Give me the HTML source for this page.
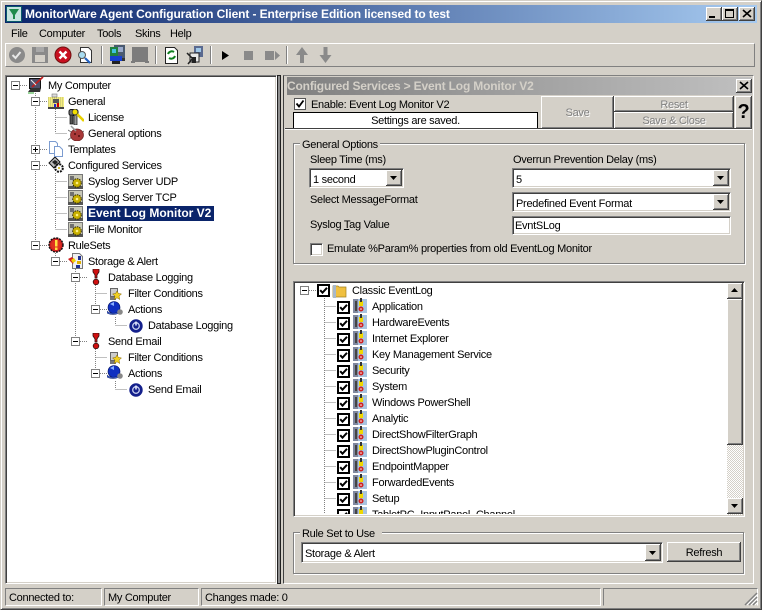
<!DOCTYPE html>
<html><head><meta charset="utf-8"><title>MonitorWare Agent Configuration Client</title>
<style>
html,body{margin:0;padding:0;background:#fff}
body{width:763px;height:611px;overflow:hidden;position:relative;font:11px "Liberation Sans",sans-serif;letter-spacing:-.28px;color:#000}
div,span.t{position:absolute;box-sizing:border-box}
.t{white-space:nowrap;line-height:16px;height:16px;margin-top:1px}
.b{margin-top:0;font-weight:bold;font-size:12px}
.sunk{background:#fff;border:1px solid;border-color:#808080 #fff #fff #808080;box-shadow:inset 1px 1px #404040,inset -1px -1px #d4d0c8}
.btn{background:#d4d0c8;box-shadow:inset -1px -1px #404040,inset 1px 1px #fff,inset -2px -2px #808080}
.grp{border:1px solid #808080;box-shadow:1px 1px #fff,inset 1px 1px #fff}
.lg{background:#d4d0c8;padding:0 2px}
.dis{color:#808080;text-shadow:1px 1px #fff;text-align:center}
svg{position:absolute;overflow:visible}
</style></head><body>
<div style="left:0;top:0;width:762px;height:610px;background:#d4d0c8;border:1px solid;border-color:#d4d0c8 #404040 #404040 #d4d0c8;box-shadow:inset 1px 1px #fff,inset -1px -1px #808080"></div>
<div style="left:5px;top:5px;width:752px;height:18px;background:linear-gradient(90deg,#0a246a,#a6caf0)"></div>
<svg style="left:6px;top:6px" width="16" height="16"><rect x=".5" y=".5" width="15" height="15" fill="#c8e4e0" stroke="#0a5a6a"/><path d="M3 3h10L9 9v4H7V9z" fill="#1f8a4c"/></svg>
<span class="t b" style="left:25px;top:6px;color:#fff;letter-spacing:-.11px">MonitorWare Agent Configuration Client - Enterprise Edition licensed to test</span>
<div class="btn" style="left:706px;top:7px;width:16px;height:14px"></div><div style="left:709px;top:16px;width:6px;height:2px;background:#000"></div>
<div class="btn" style="left:722px;top:7px;width:16px;height:14px"></div><div style="left:725px;top:9px;width:9px;height:9px;border:1px solid #000;border-top-width:2px"></div>
<div class="btn" style="left:739px;top:7px;width:16px;height:14px"></div>
<svg style="left:739px;top:7px" width="16" height="14"><path d="M4 3l8 7M12 3l-8 7" stroke="#000" stroke-width="1.6"/></svg>
<span class="t" style="left:11px;top:25px">File</span><span class="t" style="left:39px;top:25px">Computer</span><span class="t" style="left:97px;top:25px">Tools</span><span class="t" style="left:135px;top:25px">Skins</span><span class="t" style="left:170px;top:25px">Help</span>
<div style="left:5px;top:43px;width:750px;height:24px;border-top:1px solid #fff;border-bottom:1px solid #808080;border-left:1px solid #fff;border-right:1px solid #808080"></div>
<svg style="left:0;top:0" width="763" height="611">
<defs>
<symbol id="comp" viewBox="0 0 16 16" overflow="visible"><rect x="1.500" y="1.500" width="11" height="10" fill="#50506a" stroke="#111"/><path d="M0 15l3-4h10l-1 4z" fill="#333"/><path d="M4 10L15 0" stroke="#c02020" stroke-width="1.800"/><path d="M3 3l5 5" stroke="#eee"/><path d="M0 16h6" stroke="#3a3"/></symbol>
<symbol id="gen" viewBox="0 0 16 16"><rect x="0" y="4" width="16" height="11" fill="#f4ee80"/><path d="M0 5h16M0 7h16M0 9h16M0 11h16M0 13h16" stroke="#b8b470" stroke-dasharray="1 1"/><rect x="0" y="14" width="16" height="2" fill="#444"/><rect x="5" y="6" width="6" height="4" fill="#555"/><rect x="9" y="10" width="2" height="4" fill="#c00"/><rect x="6" y="11" width="2" height="3" fill="#22c"/><rect x="4" y="1" width="5" height="3" fill="#ddd" stroke="#777" stroke-width=".6"/></symbol>
<symbol id="keys" viewBox="0 0 16 16"><rect x="1" y="0.500" width="9" height="6" rx="2" fill="#777" stroke="#111"/><rect x="2" y="6" width="3" height="9" fill="#555" stroke="#111" stroke-width=".7"/><rect x="6" y="6" width="3" height="10" fill="#999" stroke="#111" stroke-width=".7"/><path d="M8 4l8 8" stroke="#e8d000" stroke-width="2.600"/><circle cx="7" cy="3" r="2.800" fill="#f4e000" stroke="#333" stroke-width=".7"/></symbol>
<symbol id="bug" viewBox="0 0 16 16"><path d="M0 5l5 3M0 15l5-4M16 6l-3 2" stroke="#777"/><ellipse cx="9" cy="10" rx="6.500" ry="6" fill="#a83838" stroke="#6a2020" stroke-width=".7"/><path d="M3 1l5 5" stroke="#999" stroke-width="1.500"/><circle cx="7" cy="9" r="1" fill="#501010"/><circle cx="11" cy="11" r="1" fill="#501010"/></symbol>
<symbol id="tmpl" viewBox="0 0 16 16"><path d="M1.500.5h6l2 2v10h-8z" fill="#fff" stroke="#7c9cd0"/><path d="M6.500 5.500h5l3 3v7h-8z" fill="#fff" stroke="#7c9cd0"/></symbol>
<symbol id="cfg" viewBox="0 0 16 16"><path d="M1 6l6-6 5 5-6 6z" fill="#bbb" stroke="#111"/><path d="M4 5l3-2 3 2-3 3z" fill="#222"/><circle cx="11" cy="11" r="3.800" fill="none" stroke="#111" stroke-width="2" stroke-dasharray="2 1"/><circle cx="11" cy="11" r="1" fill="#c9b000"/></symbol>
<symbol id="svc" viewBox="0 0 16 16"><rect x="0.500" y="1.500" width="14" height="13" fill="#c8c8b8" stroke="#777"/><rect x="2" y="3" width="4" height="4" fill="#707070"/><rect x="0" y="13" width="15" height="3" fill="#555"/><circle cx="9" cy="10" r="4.300" fill="#c8b000" stroke="#2a2400" stroke-dasharray="1.500 1"/><circle cx="9" cy="10" r="1.300" fill="#fff080"/></symbol>
<symbol id="rules" viewBox="0 0 16 16"><circle cx="8" cy="8" r="7" fill="#d02020" stroke="#101010" stroke-width="1.400" stroke-dasharray="2 1"/><circle cx="8" cy="8" r="5" fill="#e03020"/><rect x="7" y="3" width="2.500" height="6.500" fill="#ffe040"/><rect x="7" y="10.500" width="2.500" height="2.500" fill="#ffe040"/></symbol>
<symbol id="store" viewBox="0 0 16 16"><path d="M4.500.5h7l3 3v12h-10z" fill="#f0f0f0" stroke="#777"/><path d="M0 6l4-2 3 3-2 4z" fill="#d02020"/><path d="M3 7l3-2 2 3-3 2z" fill="#f0d000"/><rect x="10" y="3" width="3" height="4" fill="#203090"/><rect x="9" y="8" width="4" height="3" fill="#e0b000"/><rect x="8" y="12" width="4" height="3" fill="#203090"/></symbol>
<symbol id="excl" viewBox="0 0 16 16"><path d="M5 0h6v3l-2 3v3H7V6L5 3z" fill="#d01010" stroke="#301010" stroke-width=".8"/><circle cx="8" cy="13" r="2.800" fill="#d01010" stroke="#301010" stroke-width=".8"/></symbol>
<symbol id="filt" viewBox="0 0 12 12"><rect x="0.500" y="0.500" width="7" height="8" fill="#ccc" stroke="#666"/><rect x="0" y="9" width="6" height="3" fill="#777"/><path d="M7 3l1.500 2.500L11.500 6 9 8l.8 3.500L7 9.800 4 11.500 5 8 2.500 6l3-.5z" fill="#f0d020" stroke="#806000" stroke-width=".5"/></symbol>
<symbol id="act" viewBox="0 0 16 16"><ellipse cx="7" cy="6.500" rx="6" ry="6" fill="#1030c0" stroke="#001060" stroke-width=".6"/><path d="M3 3l4-2v4z" fill="#8ab0ff"/><path d="M0 10c3 3 9 3 12 0v2c-3 2-9 2-12 0z" fill="#4060d0" stroke="#102060" stroke-width=".5"/><circle cx="13" cy="11" r="2.800" fill="#888"/></symbol>
<symbol id="pwr" viewBox="0 0 14 14"><circle cx="7" cy="7" r="6.700" fill="#14208c"/><circle cx="7" cy="7" r="3.300" fill="none" stroke="#c8d0f0" stroke-width="1.300"/><path d="M7 2.500v4" stroke="#e8ecff" stroke-width="1.500"/></symbol>
<symbol id="el" viewBox="0 0 14 16"><rect x="0" y="1" width="6" height="14" fill="#8088a0"/><rect x="5" y="1" width="9" height="14" fill="#a8c4e0"/><rect x="6" y="3" width="4" height="5" fill="#f0d800"/><rect x="7" y="0" width="2" height="4" fill="#333"/><circle cx="8" cy="11" r="2.500" fill="#d02020"/><circle cx="8" cy="11" r=".8" fill="#fff"/><rect x="2" y="3" width="2" height="10" fill="#444"/></symbol>
<symbol id="chk" viewBox="0 0 13 13"><rect x="1" y="1" width="11" height="11" fill="#fff" stroke="#000" stroke-width="2"/><path d="M3.200 6.200l2.300 2.500L10 3.800" fill="none" stroke="#000" stroke-width="2"/></symbol>
<symbol id="minus" viewBox="0 0 9 9"><rect x=".5" y=".5" width="8" height="8" fill="#fff" stroke="#808080"/><path d="M2 4.500h5" stroke="#000"/></symbol>
<symbol id="plus" viewBox="0 0 9 9"><rect x=".5" y=".5" width="8" height="8" fill="#fff" stroke="#808080"/><path d="M2 4.500h5M4.500 2v5" stroke="#000"/></symbol>
</defs>
</svg>
<!-- toolbar -->
<svg style="left:0;top:44px" width="340" height="22">
<circle cx="17" cy="11" r="8" fill="#8a8a8a"/><path d="M12.500 11l3 3 5-6" fill="none" stroke="#e8e8e8" stroke-width="2"/>
<rect x="32" y="3" width="16" height="16" fill="#8a8a8a"/><rect x="36" y="3" width="8" height="5" fill="#a8a8a8"/><rect x="35" y="11" width="10" height="7" fill="#d4d0c8"/>
<circle cx="63" cy="11" r="8" fill="#c81020" stroke="#701010"/><path d="M59.500 7.500l7 7M66.500 7.500l-7 7" stroke="#fff" stroke-width="2.400"/>
<path d="M80.500 3.500h8l3 3v12h-11z" fill="#fff" stroke="#333"/><circle cx="82" cy="11" r="3.500" fill="#a8dcf0" stroke="#555"/><path d="M85 14l5 5" stroke="#2060c0" stroke-width="2.200"/>
<rect x="101" y="2" width="1" height="18" fill="#808080"/><rect x="102" y="2" width="1" height="18" fill="#fff"/>
<rect x="114" y="1" width="11" height="13" fill="#4a5a70"/><rect x="117" y="3" width="6" height="5" fill="#9ac"/><rect x="110" y="3" width="8" height="9" fill="#208040"/><rect x="112" y="5" width="4" height="4" fill="#40c0e0"/><rect x="110" y="12" width="12" height="5" fill="#1840d0"/><rect x="112" y="17" width="8" height="3" fill="#222"/><rect x="122" y="14" width="3" height="3" fill="#333"/>
<rect x="132" y="3" width="16" height="15" fill="#7c7c7c"/><rect x="131" y="17" width="4" height="2" fill="#7c7c7c"/><rect x="145" y="17" width="4" height="2" fill="#7c7c7c"/>
<rect x="155" y="2" width="1" height="18" fill="#808080"/><rect x="156" y="2" width="1" height="18" fill="#fff"/>
<path d="M165.500 3.500h9l3 3v13h-12z" fill="#fff" stroke="#222"/><path d="M168 10a4 4 0 0 1 6-2M175 12a4 4 0 0 1-6 2" fill="none" stroke="#108020" stroke-width="2"/>
<rect x="194" y="2" width="9" height="11" fill="#5a6a90"/><rect x="196" y="4" width="5" height="4" fill="#a0c8e8"/><rect x="190" y="9" width="9" height="9" fill="#e8e8e8" stroke="#222"/><path d="M187 9l5 5M188 20l5-6" stroke="#222" stroke-width="1.500"/><rect x="192" y="13" width="4" height="6" fill="#222"/>
<rect x="210" y="2" width="1" height="18" fill="#808080"/><rect x="211" y="2" width="1" height="18" fill="#fff"/>
<path d="M222 7l7 4.500-7 4.500z" fill="#000"/>
<rect x="244" y="7" width="9" height="9" fill="#8a8a8a"/>
<rect x="265" y="7" width="9" height="9" fill="#8a8a8a"/><path d="M275 7l5 4.500-5 4.500z" fill="#8a8a8a"/>
<rect x="286" y="2" width="1" height="18" fill="#808080"/><rect x="287" y="2" width="1" height="18" fill="#fff"/>
<path d="M302 3l6 8h-4v8h-4v-8h-4z" fill="#8a8a8a"/>
<path d="M323.500 3h4v8h4l-6 8-6-8h4z" fill="#8a8a8a"/>
</svg>
<!-- left tree -->
<div class="sunk" style="left:5px;top:75px;width:272px;height:509px"></div>
<div style="left:277px;top:75px;width:4px;height:509px;background:#909090;border:1px solid #202020"></div>
<svg style="left:0;top:0" width="280" height="410">
<g stroke="#808080" stroke-dasharray="1 1" fill="none">
<path d="M20 85.500h8M35.500 93v152M40 101.500h8M40 149.500h8M40 165.500h8M40 245.500h8"/>
<path d="M55.500 109v24M55.500 117.500h12M55.500 133.500h12M55.500 173v56M55.500 181.500h12M55.500 197.500h12M55.500 213.500h12M55.500 229.500h12M55.500 253v8M60 261.500h8"/>
<path d="M75.500 269v72M80 277.500h8M80 341.500h8M95.500 285v24M95.500 293.500h12M100 309.500h7M115.500 317v8M115.500 325.500h12M95.500 349v24M95.500 357.500h12M100 373.500h7M115.500 381v8M115.500 389.500h12"/>
</g>
<use href="#minus" x="11" y="81" width="9" height="9"/><use href="#minus" x="31" y="97" width="9" height="9"/><use href="#plus" x="31" y="145" width="9" height="9"/><use href="#minus" x="31" y="161" width="9" height="9"/><use href="#minus" x="31" y="241" width="9" height="9"/><use href="#minus" x="51" y="257" width="9" height="9"/><use href="#minus" x="71" y="273" width="9" height="9"/><use href="#minus" x="71" y="337" width="9" height="9"/><use href="#minus" x="91" y="305" width="9" height="9"/><use href="#minus" x="91" y="369" width="9" height="9"/>
<use href="#comp" x="28" y="77" width="16" height="16"/>
<use href="#gen" x="48" y="93" width="16" height="16"/>
<use href="#keys" x="68" y="109" width="16" height="16"/>
<use href="#bug" x="68" y="125" width="16" height="16"/>
<use href="#tmpl" x="48" y="141" width="16" height="16"/>
<use href="#cfg" x="48" y="157" width="16" height="16"/>
<use href="#svc" x="68" y="173" width="16" height="16"/><use href="#svc" x="68" y="189" width="16" height="16"/><use href="#svc" x="68" y="205" width="16" height="16"/><use href="#svc" x="68" y="221" width="16" height="16"/>
<use href="#rules" x="48" y="237" width="16" height="16"/>
<use href="#store" x="68" y="253" width="16" height="16"/>
<use href="#excl" x="88" y="269" width="16" height="16"/><use href="#excl" x="88" y="333" width="16" height="16"/>
<use href="#filt" x="110" y="288" width="12" height="12"/><use href="#filt" x="110" y="352" width="12" height="12"/>
<use href="#act" x="107" y="301" width="16" height="16"/><use href="#act" x="107" y="365" width="16" height="16"/>
<use href="#pwr" x="129" y="319" width="14" height="14"/><use href="#pwr" x="129" y="383" width="14" height="14"/>
</svg>
<span class="t" style="left:48px;top:77px">My Computer</span>
<span class="t" style="left:68px;top:93px">General</span>
<span class="t" style="left:88px;top:109px">License</span>
<span class="t" style="left:88px;top:125px">General options</span>
<span class="t" style="left:68px;top:141px">Templates</span>
<span class="t" style="left:68px;top:157px">Configured Services</span>
<span class="t" style="left:88px;top:173px">Syslog Server UDP</span>
<span class="t" style="left:88px;top:189px">Syslog Server TCP</span>
<span class="t b" style="left:87px;top:206px;width:127px;height:15px;line-height:15px;background:#0a246a;color:#fff;padding-left:1px;letter-spacing:0">Event Log Monitor V2</span>
<span class="t" style="left:88px;top:221px">File Monitor</span>
<span class="t" style="left:68px;top:237px">RuleSets</span>
<span class="t" style="left:88px;top:253px">Storage &amp; Alert</span>
<span class="t" style="left:108px;top:269px">Database Logging</span>
<span class="t" style="left:128px;top:285px">Filter Conditions</span>
<span class="t" style="left:128px;top:301px">Actions</span>
<span class="t" style="left:148px;top:317px">Database Logging</span>
<span class="t" style="left:108px;top:333px">Send Email</span>
<span class="t" style="left:128px;top:349px">Filter Conditions</span>
<span class="t" style="left:128px;top:365px">Actions</span>
<span class="t" style="left:148px;top:381px">Send Email</span>
<!-- right panel -->
<div style="left:283px;top:75px;width:471px;height:509px;border:1px solid;border-color:#808080 #fff #fff #404040"></div>
<div style="left:287px;top:77px;width:465px;height:18px;background:linear-gradient(90deg,#808080,#c0c0c0)"></div>
<span class="t b" style="left:287px;top:78px;color:#d4d0c8;letter-spacing:-.17px">Configured Services &gt; Event Log Monitor V2</span>
<div class="btn" style="left:736px;top:79px;width:16px;height:14px"></div>
<svg style="left:736px;top:79px" width="16" height="14"><path d="M4 3l8 7M12 3l-8 7" stroke="#000" stroke-width="1.600"/></svg>
<svg style="left:294px;top:98px" width="12" height="12"><rect x=".5" y=".5" width="11" height="11" fill="#fff" stroke="#555"/><path d="M2.500 5.500l2.500 3 4.500-6" fill="none" stroke="#000" stroke-width="1.800"/></svg>
<span class="t" style="left:311px;top:96px">Enable: Event Log Monitor V2</span>
<div style="left:293px;top:112px;width:245px;height:17px;background:#fff;border:1px solid #000;border-bottom:0"></div>
<span class="t" style="left:293px;top:112px;width:245px;text-align:center">Settings are saved.</span>
<div style="left:285px;top:128px;width:467px;height:1px;background:#404040"></div>
<div style="left:285px;top:129px;width:467px;height:1px;background:#fff"></div>
<div class="btn dis" style="left:541px;top:96px;width:73px;height:33px;line-height:34px">Save</div>
<div class="btn dis" style="left:614px;top:96px;width:120px;height:16px;line-height:19px">Reset</div>
<div class="btn dis" style="left:614px;top:112px;width:120px;height:17px;line-height:18px">Save &amp; Close</div>
<div class="btn" style="left:735px;top:96px;width:17px;height:33px;font:bold 20px/32px 'Liberation Sans',sans-serif;text-align:center">?</div>
<!-- general options -->
<div class="grp" style="left:293px;top:143px;width:452px;height:121px"></div>
<span class="t lg" style="left:300px;top:136px">General Options</span>
<span class="t" style="left:310px;top:151px">Sleep Time (ms)</span>
<span class="t" style="left:513px;top:151px">Overrun Prevention Delay (ms)</span>
<div class="sunk" style="left:309px;top:168px;width:95px;height:20px"></div>
<span class="t" style="left:313px;top:171px">1 second</span>
<div class="btn" style="left:386px;top:170px;width:16px;height:16px"></div>
<svg style="left:390px;top:176px" width="8" height="4"><path d="M0 0h7L3.500 4z"/></svg>
<div class="sunk" style="left:512px;top:168px;width:219px;height:20px"></div>
<span class="t" style="left:516px;top:171px">5</span>
<div class="btn" style="left:713px;top:170px;width:16px;height:16px"></div>
<svg style="left:717px;top:176px" width="8" height="4"><path d="M0 0h7L3.500 4z"/></svg>
<span class="t" style="left:310px;top:191px">Select MessageFormat</span>
<div class="sunk" style="left:512px;top:192px;width:219px;height:20px"></div>
<span class="t" style="left:516px;top:195px">Predefined Event Format</span>
<div class="btn" style="left:713px;top:194px;width:16px;height:16px"></div>
<svg style="left:717px;top:200px" width="8" height="4"><path d="M0 0h7L3.500 4z"/></svg>
<span class="t" style="left:310px;top:216px">Syslog <u>T</u>ag Value</span>
<div class="sunk" style="left:512px;top:216px;width:219px;height:19px"></div>
<span class="t" style="left:515px;top:217px">EvntSLog</span>
<div class="sunk" style="left:310px;top:243px;width:13px;height:13px"></div>
<span class="t" style="left:327px;top:240px">Emulate %Param% properties from old EventLog Monitor</span>
<!-- tree -->
<div class="sunk" style="left:293px;top:281px;width:452px;height:236px;overflow:hidden"></div>
<div style="left:295px;top:283px;width:432px;height:231px;overflow:hidden">
<svg style="left:-295px;top:-283px" width="763" height="611">
<g stroke="#808080" stroke-dasharray="1 1" fill="none"><path d="M309 290.500h8M324.500 298v218M324.500 306.500h12M324.500 322.500h12M324.500 338.500h12M324.500 354.500h12M324.500 370.500h12M324.500 386.500h12M324.500 402.500h12M324.500 418.500h12M324.500 434.500h12M324.500 450.500h12M324.500 466.500h12M324.500 482.500h12M324.500 498.500h12M324.500 514.500h12"/></g>
<use href="#minus" x="300" y="286" width="9" height="9"/>
<use href="#chk" x="317" y="284" width="13" height="13"/>
<path d="M333 286h5l1 1h7v10h-13z" fill="#f0c040" stroke="#a08020" stroke-width=".7"/><path d="M333 285h3v13h-3z" fill="#a8b8c8"/>
<g id="rows">
<use href="#chk" x="337" y="301" width="13" height="13"/><use href="#el" x="353" y="298" width="14" height="16"/>
<use href="#chk" x="337" y="317" width="13" height="13"/><use href="#el" x="353" y="314" width="14" height="16"/>
<use href="#chk" x="337" y="333" width="13" height="13"/><use href="#el" x="353" y="330" width="14" height="16"/>
<use href="#chk" x="337" y="349" width="13" height="13"/><use href="#el" x="353" y="346" width="14" height="16"/>
<use href="#chk" x="337" y="365" width="13" height="13"/><use href="#el" x="353" y="362" width="14" height="16"/>
<use href="#chk" x="337" y="381" width="13" height="13"/><use href="#el" x="353" y="378" width="14" height="16"/>
<use href="#chk" x="337" y="397" width="13" height="13"/><use href="#el" x="353" y="394" width="14" height="16"/>
<use href="#chk" x="337" y="413" width="13" height="13"/><use href="#el" x="353" y="410" width="14" height="16"/>
<use href="#chk" x="337" y="429" width="13" height="13"/><use href="#el" x="353" y="426" width="14" height="16"/>
<use href="#chk" x="337" y="445" width="13" height="13"/><use href="#el" x="353" y="442" width="14" height="16"/>
<use href="#chk" x="337" y="461" width="13" height="13"/><use href="#el" x="353" y="458" width="14" height="16"/>
<use href="#chk" x="337" y="477" width="13" height="13"/><use href="#el" x="353" y="474" width="14" height="16"/>
<use href="#chk" x="337" y="493" width="13" height="13"/><use href="#el" x="353" y="490" width="14" height="16"/>
<use href="#chk" x="337" y="509" width="13" height="13"/><use href="#el" x="353" y="506" width="14" height="16"/>
</g>
</svg>
<span class="t" style="left:57px;top:-1px">Classic EventLog</span>
<span class="t" style="left:77px;top:15px">Application</span>
<span class="t" style="left:77px;top:31px">HardwareEvents</span>
<span class="t" style="left:77px;top:47px">Internet Explorer</span>
<span class="t" style="left:77px;top:63px">Key Management Service</span>
<span class="t" style="left:77px;top:79px">Security</span>
<span class="t" style="left:77px;top:95px">System</span>
<span class="t" style="left:77px;top:111px">Windows PowerShell</span>
<span class="t" style="left:77px;top:127px">Analytic</span>
<span class="t" style="left:77px;top:143px">DirectShowFilterGraph</span>
<span class="t" style="left:77px;top:159px">DirectShowPluginControl</span>
<span class="t" style="left:77px;top:175px">EndpointMapper</span>
<span class="t" style="left:77px;top:191px">ForwardedEvents</span>
<span class="t" style="left:77px;top:207px">Setup</span>
<span class="t" style="left:77px;top:223px">TabletPC_InputPanel_Channel</span>
</div>
<div style="left:727px;top:298px;width:16px;height:217px;background:repeating-conic-gradient(#d4d0c8 0 25%,#fff 0 50%) 0 0/2px 2px"></div>
<div class="btn" style="left:727px;top:283px;width:16px;height:16px"></div>
<svg style="left:731px;top:288px" width="8" height="5"><path d="M0 4h7L3.500 0z"/></svg>
<div class="btn" style="left:727px;top:299px;width:16px;height:146px"></div>
<div class="btn" style="left:727px;top:498px;width:16px;height:16px"></div>
<svg style="left:731px;top:504px" width="8" height="5"><path d="M0 0h7L3.500 4z"/></svg>
<!-- rule set -->
<div class="grp" style="left:293px;top:532px;width:451px;height:42px"></div>
<span class="t lg" style="left:300px;top:525px;padding-right:7px">Rule Set to Use</span>
<div class="sunk" style="left:301px;top:542px;width:362px;height:21px"></div>
<span class="t" style="left:305px;top:545px">Storage &amp; Alert</span>
<div class="btn" style="left:645px;top:544px;width:16px;height:17px"></div>
<svg style="left:649px;top:551px" width="8" height="4"><path d="M0 0h7L3.500 4z"/></svg>
<div class="btn" style="left:667px;top:542px;width:74px;height:20px;text-align:center;line-height:22px">Refresh</div>
<!-- status -->
<div style="left:5px;top:588px;width:97px;height:18px;border:1px solid;border-color:#808080 #fff #fff #808080"></div>
<span class="t" style="left:9px;top:589px">Connected to:</span>
<div style="left:104px;top:588px;width:95px;height:18px;border:1px solid;border-color:#808080 #fff #fff #808080"></div>
<span class="t" style="left:108px;top:589px">My Computer</span>
<div style="left:201px;top:588px;width:400px;height:18px;border:1px solid;border-color:#808080 #fff #fff #808080"></div>
<span class="t" style="left:205px;top:589px">Changes made: 0</span>
<div style="left:603px;top:588px;width:155px;height:18px;border:1px solid;border-color:#808080 #fff transparent #808080"></div>
<svg style="left:744px;top:592px" width="14" height="14"><path d="M13 1L1 13M13 5L5 13M13 9L9 13" stroke="#808080" stroke-width="1.500"/><path d="M13 3L3 13M13 7L7 13M13 11L11 13" stroke="#fff"/></svg>
</body></html>
